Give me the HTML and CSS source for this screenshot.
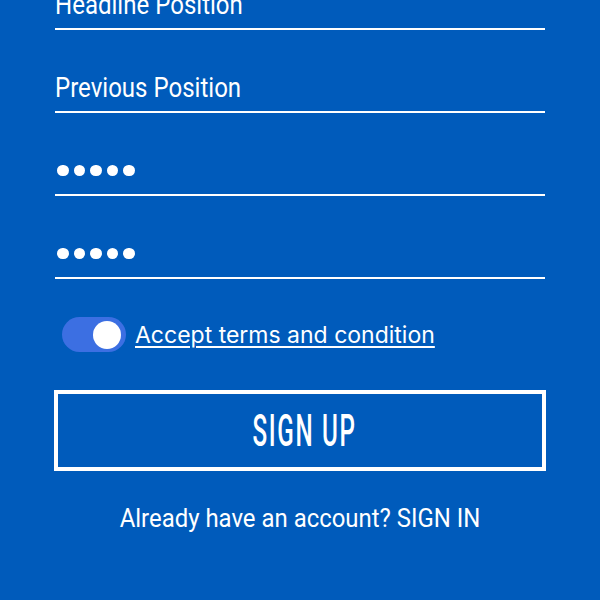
FILE: index.html
```html
<!DOCTYPE html>
<html lang="en">
<head>
    <meta charset="UTF-8">
    <meta name="viewport" content="width=device-width, initial-scale=1.0">
    <title>Sign Up</title>
    <link rel="stylesheet" href="styles.css">
</head>
<body>
    <div class="container">
        <form class="form">
            <div class="field"><span class="label">Headline Position</span></div>
            <div class="field"><span class="label">Previous Position</span></div>
            <div class="field field-pass">
                <span class="dot"></span><span class="dot"></span><span class="dot"></span><span class="dot"></span><span class="dot"></span>
            </div>
            <div class="field field-pass">
                <span class="dot"></span><span class="dot"></span><span class="dot"></span><span class="dot"></span><span class="dot"></span>
            </div>
            <div class="terms">
                <span class="toggle"><span class="knob"></span></span>
                <a href="#" class="terms-link">Accept terms and condition</a>
            </div>
            <button type="submit" class="submit"><span class="submit-text">SIGN UP</span></button>
            <p class="switch"><span class="switch-text">Already have an account? SIGN IN</span></p>
        </form>
    </div>
</body>
</html>
```

FILE: styles.css
```css
body {
    margin: 0;
    padding: 0;
    background: #005bbb;
    font-family: Roboto, "Liberation Sans", sans-serif;
    color: #fff;
    height: 600px;
    overflow: hidden;
}
.container {
    width: 490px;
    margin: 0 auto;
}
.form {
    display: flex;
    flex-direction: column;
    margin-top: -53px;
}
.field {
    height: 83px;
    box-sizing: border-box;
    border-bottom: 2px solid #fff;
    display: flex;
    align-items: flex-end;
    padding-bottom: 9px;
}
.label {
    display: inline-block;
    font-size: 27px;
    line-height: 1;
    transform: scaleX(0.89);
    transform-origin: left center;
    white-space: nowrap;
}
.field-pass {
    padding-bottom: 18px;
    padding-left: 2px;
    gap: 5px;
}
.dot {
    width: 11.5px;
    height: 11.5px;
    border-radius: 50%;
    background: #fff;
}
.terms {
    display: flex;
    align-items: center;
    margin-top: 38px;
    padding-left: 7px;
}
.toggle {
    width: 64px;
    height: 35px;
    border-radius: 18px;
    background: #3c6fe2;
    position: relative;
    flex-shrink: 0;
}
.knob {
    position: absolute;
    right: 5px;
    top: 3.5px;
    width: 28px;
    height: 28px;
    border-radius: 50%;
    background: #fff;
}
.terms-link {
    margin-left: 9px;
    font-family: Inter, Roboto, sans-serif;
    font-size: 23px;
    color: #fff;
    text-decoration: underline;
    text-underline-offset: 3px;
    text-decoration-thickness: 1.5px;
}
.submit {
    margin: 38px -1px 0;
    height: 81px;
    border: 4px solid #fff;
    background: transparent;
    color: #fff;
    font-family: Roboto, sans-serif;
    cursor: pointer;
    padding: 0 0 0 10px;
}
.submit-text {
    display: inline-block;
    font-size: 44px;
    font-weight: 500;
    letter-spacing: 3px;
    line-height: 1;
    transform: scaleX(0.55);
}
.switch {
    margin: 34px 0 0;
    text-align: center;
}
.switch-text {
    display: inline-block;
    font-size: 26px;
    line-height: 1;
    transform: scaleX(0.92);
    white-space: nowrap;
}
```
